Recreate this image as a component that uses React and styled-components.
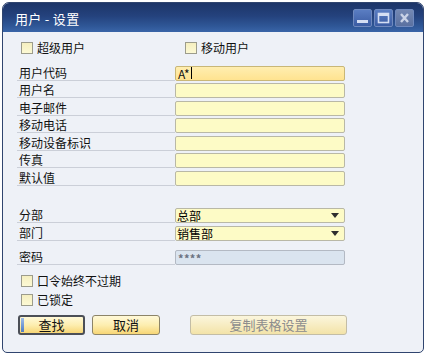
import styled, { createGlobalStyle, css } from 'styled-components';

const GlobalStyle = createGlobalStyle`
  html, body {
    margin: 0;
    padding: 0;
    background: #ffffff;
  }
  body {
    font-family: "Noto Sans CJK SC", "Liberation Sans", sans-serif;
  }
`;

const Window = styled.div`
  margin: 2px 0 0 2px;
  width: 422px;
  height: 351px;
  box-sizing: border-box;
  border: 1px solid #30456f;
  border-radius: 7px 7px 5px 5px;
  overflow: hidden;
  display: flex;
  flex-direction: column;
  background: #eef1f7;
`;

const TitleBar = styled.div`
  height: 29px;
  flex: none;
  display: flex;
  align-items: center;
  justify-content: space-between;
  padding: 0 9px 0 12px;
  background: linear-gradient(#1d3568 0%, #24427d 45%, #2f5797 80%, #3a65a8 100%);
`;

const Title = styled.div`
  color: #ffffff;
  font-size: 13px;
  letter-spacing: 0.3px;
  padding-top: 1px;
`;

const TitleButtons = styled.div`
  display: flex;
  gap: 2px;
`;

// minimize / maximize / close
const TitleButton = styled.div`
  width: 19px;
  height: 18px;
  box-sizing: border-box;
  border: 1px solid #6f89be;
  border-radius: 2px;
  display: flex;
  align-items: center;
  justify-content: center;
  background: ${(p) =>
    p.$close
      ? 'linear-gradient(#7488b3, #5a70a0)'
      : 'linear-gradient(#5a7dc2, #3b5ca3)'};
`;

const Body = styled.div`
  flex: 1;
  display: flex;
  flex-direction: column;
  padding: 9px 0 0 14px;
`;

const CheckRow = styled.div`
  display: grid;
  grid-template-columns: 164px auto;
  height: 14px;
  align-items: center;
`;

const CheckItem = styled.label`
  display: flex;
  align-items: center;
  gap: 4px;
  padding-left: 4px;
  font-size: 12px;
  color: #111;
  line-height: 14px;
`;

const Box = styled.span`
  width: 12px;
  height: 12px;
  box-sizing: border-box;
  border: 1px solid #9c9c8c;
  background: linear-gradient(#f5efc0, #fcf9d4);
  flex: none;
`;

const Form = styled.div`
  display: flex;
  flex-direction: column;
  margin-top: ${(p) => p.$top}px;
`;

const Row = styled.div`
  display: grid;
  grid-template-columns: 158px 170px;
  height: ${(p) => p.$h || 17.5}px;
`;

const Label = styled.div`
  border-bottom: 1px solid #cbcfd8;
  font-size: 12px;
  color: #111;
  padding-left: 2px;
  display: flex;
  align-items: flex-end;
  line-height: 15px;
`;

const fieldBase = css`
  align-self: end;
  height: 15px;
  box-sizing: border-box;
  border: 1px solid #b9b8a6;
  border-radius: 2px;
  display: flex;
  align-items: center;
  padding-left: 2px;
  font-size: 12px;
  line-height: 13px;
  color: #111;
`;

const Field = styled.div`
  ${fieldBase}
  background: ${(p) =>
    p.$focus ? 'linear-gradient(#ffeeb0, #ffe390)' : '#fdfbc6'};
  border-color: ${(p) => (p.$focus ? '#c9b777' : '#b9b8a6')};
`;

const Caret = styled.span`
  display: inline-block;
  width: 1px;
  height: 12px;
  background: #000;
  margin-left: 1px;
`;

const Select = styled.div`
  ${fieldBase}
  background: #fdfbc6;
  justify-content: space-between;
  padding-left: 1px;
  padding-right: 5px;
  color: #000;
`;

const Arrow = styled.span`
  width: 0;
  height: 0;
  border-left: 4px solid transparent;
  border-right: 4px solid transparent;
  border-top: 5px solid #2e2e2e;
`;

const Password = styled.div`
  ${fieldBase}
  background: #dae4ef;
  border-color: #b3b9c3;
  font-size: 11px;
  font-weight: bold;
  color: #6a7080;
  letter-spacing: 0.3px;
  padding-top: 3px;
`;

const Checks = styled.div`
  display: flex;
  flex-direction: column;
  gap: 5px;
  margin-top: 9px;
`;

const Buttons = styled.div`
  display: flex;
  align-items: center;
  margin-top: 8px;
  padding-left: 1px;
`;

const Button = styled.div`
  height: 20px;
  box-sizing: border-box;
  width: ${(p) => p.$w}px;
  margin-right: ${(p) => p.$mr || 0}px;
  border: 1px solid ${(p) => (p.$disabled ? '#c3bda6' : '#8c8468')};
  border-radius: 3px;
  background: ${(p) =>
    p.$disabled
      ? 'linear-gradient(#fbf6dd, #f3e3a8)'
      : 'linear-gradient(#fff9d8 0%, #fdeeb0 50%, #f7d676 100%)'};
  color: ${(p) => (p.$disabled ? '#8d8d8d' : '#111')};
  font-size: 13px;
  display: flex;
  align-items: center;
  justify-content: center;
  position: relative;
  ${(p) =>
    p.$default &&
    css`
      border: 2px solid #4b4f57;
      &::before {
        content: '';
        position: absolute;
        left: 1px;
        top: 1px;
        bottom: 1px;
        width: 3px;
        background: linear-gradient(#9fbde8, #4f7cc4);
      }
    `}
`;

const Spacer = styled.div`
  height: ${(p) => p.$h}px;
`;

const fields = ['用户代码', '用户名', '电子邮件', '移动电话', '移动设备标识', '传真', '默认值'];

export default function App() {
  return (
    <>
      <GlobalStyle />
      <Window>
        <TitleBar>
          <Title>用户 - 设置</Title>
          <TitleButtons>
            <TitleButton>
              <svg width="13" height="12" viewBox="0 0 13 12">
                <rect x="1" y="8" width="11" height="3" fill="#d4def3" />
              </svg>
            </TitleButton>
            <TitleButton>
              <svg width="13" height="12" viewBox="0 0 13 12">
                <rect x="1.5" y="1.5" width="10" height="9" fill="none" stroke="#d4def3" strokeWidth="1.6" />
                <rect x="1" y="1" width="11" height="3" fill="#d4def3" />
              </svg>
            </TitleButton>
            <TitleButton $close>
              <svg width="13" height="12" viewBox="0 0 13 12">
                <path d="M3 2 L10 10 M10 2 L3 10" stroke="#c9d2e6" strokeWidth="2.4" />
              </svg>
            </TitleButton>
          </TitleButtons>
        </TitleBar>
        <Body>
          <CheckRow>
            <CheckItem>
              <Box />
              超级用户
            </CheckItem>
            <CheckItem>
              <Box />
              移动用户
            </CheckItem>
          </CheckRow>
          <Form $top={8}>
            {fields.map((f, i) => (
              <Row key={f}>
                <Label>{f}</Label>
                {i === 0 ? (
                  <Field $focus>
                    A*
                    <Caret />
                  </Field>
                ) : (
                  <Field />
                )}
              </Row>
            ))}
          </Form>
          <Form $top={20}>
            <Row $h={17}>
              <Label>分部</Label>
              <Select>
                总部
                <Arrow />
              </Select>
            </Row>
            <Row $h={18}>
              <Label>部门</Label>
              <Select>
                销售部
                <Arrow />
              </Select>
            </Row>
            <Spacer $h={7} />
            <Row $h={17}>
              <Label>密码</Label>
              <Password>****</Password>
            </Row>
          </Form>
          <Checks>
            <CheckItem>
              <Box />
              口令始终不过期
            </CheckItem>
            <CheckItem>
              <Box />
              已锁定
            </CheckItem>
          </Checks>
          <Buttons>
            <Button $w={67} $mr={7} $default>
              查找
            </Button>
            <Button $w={68} $mr={30}>
              取消
            </Button>
            <Button $w={157} $disabled>
              复制表格设置
            </Button>
          </Buttons>
        </Body>
      </Window>
    </>
  );
}
